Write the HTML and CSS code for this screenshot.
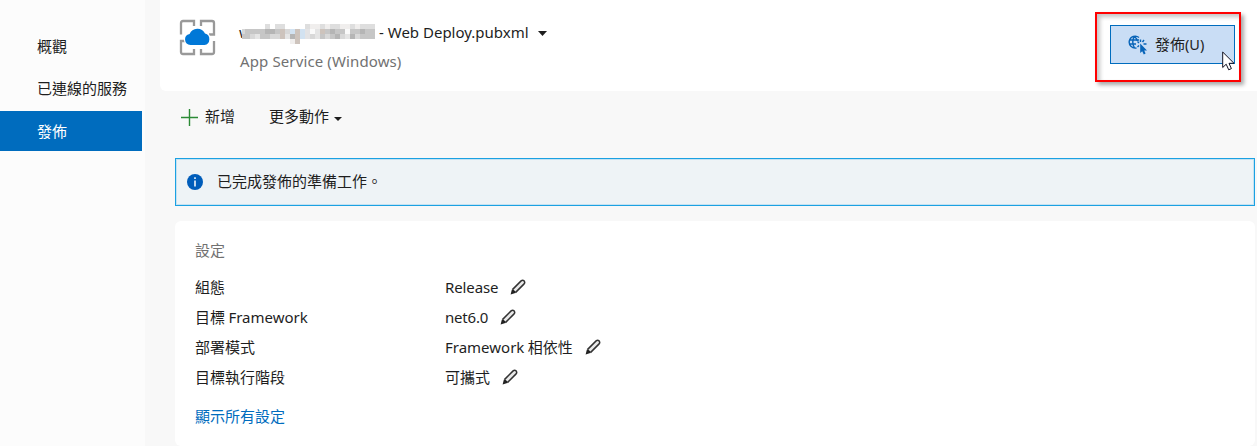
FILE: index.html
```html
<!DOCTYPE html>
<html lang="zh-Hant">
<head>
<meta charset="utf-8">
<title>發佈</title>
<link rel="stylesheet" href="styles.css">
</head>
<body>
<svg width="0" height="0" class="defs">
  <symbol id="pencil" viewBox="0 0 16 16">
    <path d="M1 15.3 2.2 10.7 11.1 1.9Q12.6.7 14.1 1.9 15.3 3.4 14.1 4.9L5.3 13.8Z" fill="#e9e9e9"/>
    <path d="M2.4 10.6 11.1 1.9Q12.6.7 14.1 1.9 15.3 3.4 14.1 4.9L5.4 13.6" fill="none" stroke="#333" stroke-width="1.5"/>
    <path d="M.6 15.5 1.8 10.7 3.5 10.7 5.4 12.6 5.3 14.1Z" fill="#222"/>
  </symbol>
</svg>
<div class="app">
  <nav class="sidebar">
    <a class="nav-item">概觀</a>
    <a class="nav-item">已連線的服務</a>
    <a class="nav-item active">發佈</a>
  </nav>
  <main class="content">
    <header class="profile">
      <svg class="profile-icon" width="37" height="37" viewBox="0 0 37 37">
        <g fill="none" stroke="#999" stroke-width="2.3">
          <path d="M2 15.5V4Q2 2 4 2H15V7M22 7V2H33Q35 2 35 4V15.5H30M35 22V33Q35 35 33 35H22V30M15 30V35H4Q2 35 2 33V22H7"/>
        </g>
        <path d="M11.5 26A5.600 5.600 0 0 1 10.600 14.900 8.400 8.400 0 0 1 26 14.500 5.900 5.900 0 0 1 25.500 26Z" fill="#0078d7" stroke="#fff" stroke-width="2.4" paint-order="stroke"/>
      </svg>
      <div class="profile-text">
        <div class="profile-name">
          <svg class="mosaic" width="136" height="20" viewBox="0 0 136 20" shape-rendering="crispEdges">
            <text class="masked" x="-1" y="14">w</text>
            <path d="M2 5H135V15H2Z" fill="#c6c6c6"/>
            <path d="M25 0h5v5h-5zM35 0h10v5h-10zM65 0h5v5h-5zM80 0h5v5h-5zM90 0h10v5h-10zM110 0h5v5h-5zM120 0h15v5h-15z" fill="#dedede"/>
            <path d="M70 0h10v5h-10zM85 0h5v5h-5zM100 0h10v5h-10zM115 0h5v5h-5zM50 15h5v5h-5z" fill="#f0eeed"/>
            <path d="M2 5h3v5h-3zM10 10h5v5h-5zM30 10h10v5h-10zM45 5h5v5h-5zM70 10h5v5h-5zM85 10h5v5h-5zM100 10h5v5h-5zM115 10h5v5h-5z" fill="#d8d8d8"/>
            <path d="M15 10h5v5h-5zM45 10h5v5h-5zM75 5h5v5h-5zM75 10h5v5h-5zM105 10h5v5h-5z" fill="#e5e5e5"/>
            <path d="M25 5h10v5h-10zM50 10h5v5h-5zM90 5h5v5h-5zM95 10h5v5h-5zM110 10h5v5h-5zM120 5h5v5h-5z" fill="#b5b5b5"/>
            <path d="M40 5h5v10h-5zM55 5h5v10h-5zM80 5h5v5h-5zM55 15h5v5h-5z" fill="#cdc3bc"/>
            <path d="M60 5h5v10h-5zM50 5h5v5h-5z" fill="#d2e2f1"/>
            <path d="M65 5h5v10h-5z" fill="#e3e3e5"/>
            <path d="M70 5h5v5h-5zM105 5h5v5h-5z" fill="#fafafa"/>
          </svg>
          <span class="latin title">- Web Deploy.pubxml</span>
          <svg class="caret" width="9" height="5" viewBox="0 0 9 5"><path d="M0 0H9L4.5 5Z" fill="#1e1e1e"/></svg>
        </div>
        <div class="profile-type latin">App Service (Windows)</div>
      </div>
      <div class="highlight">
        <button class="publish">
          <svg width="20" height="20" viewBox="0 0 20 20">
            <g fill="none" stroke="#0864b8" stroke-width="1.4"><path d="M11 2.5A6 6 0 1 0 8.5 13M1.5 5H11M1 9H8M6.5 1.2Q3 7 6.5 13M6.5 1.2Q9.2 4 9.2 6"/><path d="M12.5 4.5V7M9.5 6.5 11 8M16 5 14.5 7M15.5 9H18.5M9.5 12 11 10.5"/></g>
            <path d="M12.2 8.5V18L14.2 16.2 15.8 19.5 17.6 18.6 16.2 15.5H19Z" fill="#0864b8"/>
          </svg>
          <span class="publish-label">發佈<span class="latin">(U)</span></span>
        </button>
        <svg class="cursor" width="13" height="20" viewBox="0 0 13 20"><path d="M.7 1V16.5L4.2 13.2 6.7 18.8 9.4 17.6 7 12.3H12Z" fill="#fff" stroke="#101020"/></svg>
      </div>
    </header>
    <div class="toolbar">
      <svg width="17" height="17" viewBox="0 0 17 17"><path d="M8.5 0V17M0 8.5H17" stroke="#2b8a35" stroke-width="1.4"/></svg>
      <span class="add">新增</span>
      <span class="more">更多動作</span>
      <svg class="more-caret" width="8" height="4" viewBox="0 0 8 4"><path d="M0 0H8L4 4Z" fill="#1e1e1e"/></svg>
    </div>
    <div class="notice">
      <svg width="16" height="16" viewBox="0 0 16 16"><circle cx="8" cy="8" r="8" fill="#005dba"/><path d="M8 3.2V5M8 6.5V12.5" stroke="#fff" stroke-width="1.5"/></svg>
      <span class="notice-text">已完成發佈的準備工作。</span>
    </div>
    <section class="settings">
      <h2>設定</h2>
      <dl>
        <dt>組態</dt><dd><span class="latin release">Release</span><svg class="edit"><use href="#pencil"/></svg></dd>
        <dt>目標 <span class="latin">Framework</span></dt><dd><span class="latin version">net6.0</span><svg class="edit"><use href="#pencil"/></svg></dd>
        <dt>部署模式</dt><dd><span><span class="latin">Framework</span> 相依性</span><svg class="edit"><use href="#pencil"/></svg></dd>
        <dt>目標執行階段</dt><dd>可攜式<svg class="edit"><use href="#pencil"/></svg></dd>
      </dl>
      <a class="show-all">顯示所有設定</a>
    </section>
  </main>
</div>
</body>
</html>
```
FILE: styles.css
```css
* { box-sizing: border-box; }
body { margin: 0; overflow: hidden; background: #f8f8f8; color: #1e1e1e; font: 15px/20px "Noto Sans CJK TC", sans-serif; }
svg { display: block; flex: none; }
.defs { position: absolute; }
.latin { font-family: "Noto Sans", sans-serif; font-size: 15px; }
.app { display: flex; width: 1257px; height: 446px; }
.sidebar { width: 145px; padding: 26px 3px 0 0; background: #fcfcfc; flex: none; }
.nav-item { display: flex; align-items: center; height: 40px; margin-bottom: 2px; padding-left: 37px; }
.nav-item.active { margin-top: 3px; background: #006cbe; color: #fff; }
.content { flex: 1; padding-left: 15px; min-width: 0; }
.profile { display: flex; height: 91px; padding: 12px 0 0 19px; background: #fff; border-bottom-left-radius: 6px; }
.profile-icon { margin-top: 7px; }
.profile-text { margin-left: 24px; padding-top: 9px; }
.profile-name { display: flex; align-items: center; height: 22px; }
.mosaic { margin-top: 4px; overflow: visible; }
.masked { font: 15px "Noto Sans", sans-serif; fill: #1e1e1e; }
.title { margin-left: 3px; white-space: nowrap; }
.caret { margin: 2px 0 0 9px; }
.profile-type { margin-top: 8px; color: #717171; letter-spacing: .12px; white-space: nowrap; }
.highlight { position: relative; width: 146px; height: 70px; margin: 0 16px 0 auto; padding: 11px 0 0 13px; border: 2px solid #f00; box-shadow: 3px 3px 4px #aaa, inset 3px 3px 4px #c4c4c4; }
.publish { display: flex; align-items: center; width: 125px; height: 39px; padding: 0 0 0 17px; gap: 7px; border: 1px solid #006cbe; background: #c9ddf5; color: #1e1e1e; font: inherit; }
.publish .latin { font-size: 14.5px; }
.publish-label { padding-bottom: 2px; }
.cursor { position: absolute; left: 125px; top: 37px; }
.toolbar { display: flex; align-items: center; height: 52px; padding-left: 21px; }
.add { margin-left: 7px; padding-bottom: 2px; }
.more { margin-left: 34px; padding-bottom: 2px; }
.more-caret { margin: 4px 0 0 5px; }
.notice { display: flex; align-items: center; height: 48px; margin: 15px 2px 15px 15px; padding-left: 11px; gap: 14px; border: 1px solid #1ba1e2; background: #eef3f6; box-shadow: inset 0 0 0 1px #c5e2f2; }
.notice-text { padding-bottom: 2px; }
.settings { height: 225px; margin: 0 2px 0 15px; padding: 19px 20px 20px; background: #fff; border-radius: 6px; }
h2 { margin: 0 0 12px; color: #717171; font-size: 15px; font-weight: 400; line-height: 20px; }
dl { display: grid; grid-template-columns: 250px 1fr; grid-auto-rows: 30px; align-items: center; margin: 0 0 14px; }
dd { display: flex; align-items: center; margin: 0; }
.release { letter-spacing: -.12px; }
.version { letter-spacing: -.2px; }
.edit { width: 16px; height: 16px; margin-left: 12px; }
.show-all { color: #006cbe; }
```
